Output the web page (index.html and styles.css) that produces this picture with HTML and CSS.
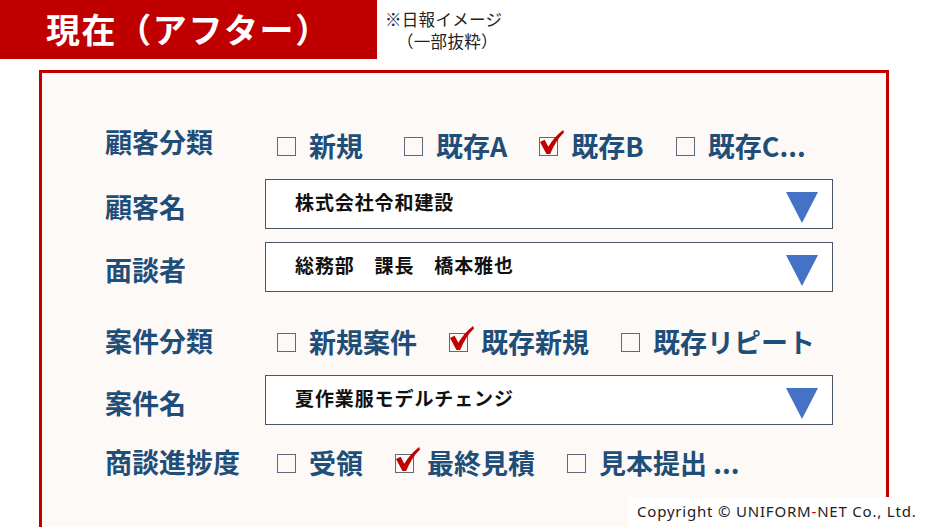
FILE: index.html
```html
<!DOCTYPE html>
<html lang="ja">
<head>
<meta charset="utf-8">
<title>現在（アフター）</title>
<link rel="stylesheet" href="styles.css">
</head>
<body>
<div class="page">
  <header class="header">
    <div class="title">現在（アフター）</div>
    <div class="note">
      <div>※日報イメージ</div>
      <div class="note-sub">（一部抜粋）</div>
    </div>
  </header>

  <main class="panel">
    <div class="row row-1">
      <div class="label label-high">顧客分類</div>
      <div class="options">
        <div class="opt opt-wide"><span class="box"></span><span>新規</span></div>
        <div class="opt"><span class="box"></span><span>既存A</span></div>
        <div class="opt"><span class="box checked"><svg class="check" viewBox="0 0 26 28"><path d="M0 13 L5 10.5 L9 18 Q15 8 25 0 L26 2.5 Q17 11 11 26 L7 26 Z"/></svg></span><span>既存B</span></div>
        <div class="opt"><span class="box"></span><span>既存C...</span></div>
      </div>
    </div>

    <div class="row row-2">
      <div class="label label-low">顧客名</div>
      <div class="select"><span class="select-text">株式会社令和建設</span><span class="tri"></span></div>
    </div>

    <div class="row row-3">
      <div class="label label-low">面談者</div>
      <div class="select"><span class="select-text">総務部　課長　橋本雅也</span><span class="tri"></span></div>
    </div>

    <div class="row row-4">
      <div class="label">案件分類</div>
      <div class="options">
        <div class="opt"><span class="box"></span><span>新規案件</span></div>
        <div class="opt"><span class="box checked"><svg class="check" viewBox="0 0 26 28"><path d="M0 13 L5 10.5 L9 18 Q15 8 25 0 L26 2.5 Q17 11 11 26 L7 26 Z"/></svg></span><span>既存新規</span></div>
        <div class="opt"><span class="box"></span><span>既存リピート</span></div>
      </div>
    </div>

    <div class="row row-5">
      <div class="label label-low">案件名</div>
      <div class="select"><span class="select-text">夏作業服モデルチェンジ</span><span class="tri"></span></div>
    </div>

    <div class="row row-6">
      <div class="label">商談進捗度</div>
      <div class="options">
        <div class="opt"><span class="box"></span><span>受領</span></div>
        <div class="opt"><span class="box checked"><svg class="check" viewBox="0 0 26 28"><path d="M0 13 L5 10.5 L9 18 Q15 8 25 0 L26 2.5 Q17 11 11 26 L7 26 Z"/></svg></span><span>最終見積</span></div>
        <div class="opt"><span class="box"></span><span>見本提出 ...</span></div>
      </div>
    </div>
  </main>

  <div class="copyright">Copyright © UNIFORM<span class="dash">-</span>NET Co., Ltd.</div>
</div>
</body>
</html>
```

FILE: styles.css
```css
* { box-sizing: border-box; }

html, body {
  margin: 0;
  padding: 0;
  background: #ffffff;
}

.page {
  position: relative;
  width: 937px;
  height: 527px;
  overflow: hidden;
  font-family: "Noto Sans CJK JP", "Noto Sans", sans-serif;
}

.header {
  display: flex;
  align-items: flex-start;
  height: 70px;
}

.title {
  width: 377px;
  height: 59px;
  background: #c00000;
  color: #ffffff;
  font-size: 34px;
  font-weight: 700;
  letter-spacing: 1.6px;
  line-height: 58px;
  padding-left: 46px;
  white-space: nowrap;
}

.note {
  padding-left: 8px;
  padding-top: 8px;
  font-size: 16.5px;
  line-height: 22px;
  color: #222222;
  letter-spacing: 0.3px;
}

.note-sub {
  padding-left: 12px;
}

.panel {
  margin-left: 39px;
  width: 850px;
  height: 470px;
  border: 3px solid #c00000;
  border-bottom: none;
  background: #fdf9f6;
  padding-left: 63px;
  padding-top: 52px;
  display: flex;
  flex-direction: column;
}

.row {
  display: flex;
  align-items: center;
}

.row-1 { height: 40px; }
.row-2 { height: 50px; margin-top: 14px; }
.row-3 { height: 50px; margin-top: 13px; }
.row-4 { height: 40px; margin-top: 29px; }
.row-5 { height: 50px; margin-top: 14px; }
.row-6 { height: 40px; margin-top: 17px; }

.label {
  width: 160px;
  flex: none;
  font-size: 27px;
  font-weight: 700;
  color: #1f4e79;
  line-height: 1;
  white-space: nowrap;
  padding-bottom: 1px;
}

.label-high {
  padding-bottom: 7px;
}

.label-low {
  padding-bottom: 0;
  padding-top: 4px;
}

.options {
  display: flex;
  align-items: center;
  gap: 32px;
  padding-left: 12px;
}

.opt {
  display: flex;
  align-items: center;
  gap: 13px;
  font-size: 27px;
  font-weight: 700;
  color: #1f4e79;
  line-height: 1;
  white-space: nowrap;
}

.opt-wide {
  margin-right: 9px;
}

.box {
  position: relative;
  width: 19px;
  height: 19px;
  border: 1.5px solid #5b6b7c;
  background: transparent;
  flex: none;
  margin-top: 2px;
}

.check {
  position: absolute;
  left: 0px;
  top: -8px;
  width: 24px;
  height: 26px;
  fill: #c00000;
}

.select {
  width: 568px;
  height: 50px;
  border: 1.5px solid #4a5668;
  background: #ffffff;
  display: flex;
  align-items: center;
  justify-content: space-between;
  padding-left: 29px;
  padding-right: 14px;
  font-size: 19px;
  font-weight: 700;
  letter-spacing: 0.9px;
  color: #111111;
  white-space: pre;
}

.select-text {
  padding-bottom: 6px;
}

.tri {
  width: 0;
  height: 0;
  border-left: 16px solid transparent;
  border-right: 16px solid transparent;
  border-top: 31px solid #4472c4;
  margin-top: 6px;
}

.copyright {
  position: absolute;
  left: 628px;
  top: 497px;
  width: 302px;
  height: 30px;
  background: #ffffff;
  font-family: "Noto Sans", sans-serif;
  font-size: 15px;
  letter-spacing: 0.8px;
  color: #222222;
  line-height: 28px;
  padding-left: 9px;
  white-space: nowrap;
}

.dash {
  color: #c00000;
}
```
